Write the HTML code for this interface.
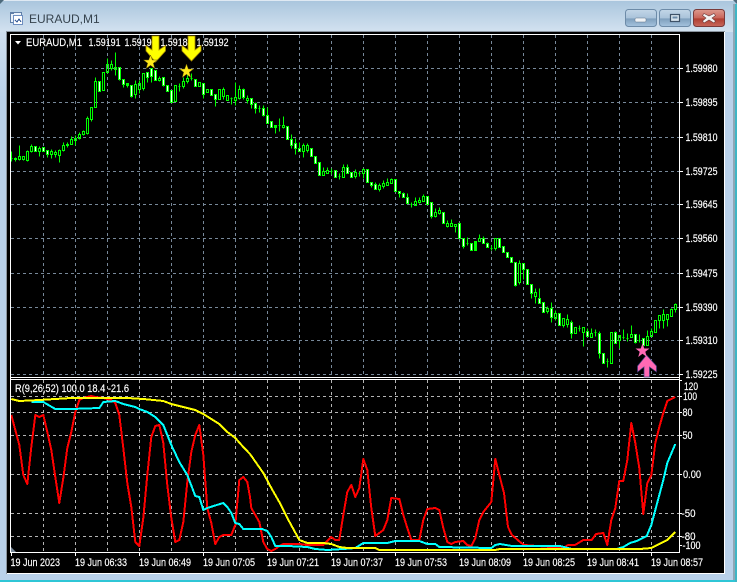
<!DOCTYPE html>
<html><head><meta charset="utf-8"><style>
html,body{margin:0;padding:0;background:#b9d1ea;width:737px;height:582px;overflow:hidden}
svg{display:block;position:absolute;left:0;top:0}
text{font-family:"Liberation Sans",sans-serif;font-size:11px;fill:#fff;stroke:#fff;stroke-width:.18px}
.c{shape-rendering:crispEdges;fill:none}
</style></head><body>
<svg width="737" height="582" viewBox="0 0 737 582" xmlns="http://www.w3.org/2000/svg">
<defs>
<linearGradient id="tb" x1="0" y1="0" x2="0" y2="1"><stop offset="0" stop-color="#a9c5dd"/><stop offset="1" stop-color="#d3e2f0"/></linearGradient>
<linearGradient id="lf" x1="0" y1="0" x2="0" y2="1"><stop offset="0" stop-color="#cfdfee"/><stop offset=".12" stop-color="#b9d1ea"/><stop offset="1" stop-color="#b9d1ea"/></linearGradient>
<linearGradient id="b1" x1="0" y1="0" x2="0" y2="1"><stop offset="0" stop-color="#c3d6e8"/><stop offset=".5" stop-color="#a9c3da"/><stop offset=".55" stop-color="#7f9fbd"/><stop offset="1" stop-color="#a5c3de"/></linearGradient>
<linearGradient id="b2" x1="0" y1="0" x2="0" y2="1"><stop offset="0" stop-color="#dd9a8f"/><stop offset=".5" stop-color="#c9655a"/><stop offset=".55" stop-color="#b03d30"/><stop offset="1" stop-color="#c8685c"/></linearGradient>
</defs>
<!-- window chrome -->
<rect x="0" y="0" width="737" height="582" fill="#b9d1ea"/>
<rect x="0" y="0" width="737" height="32" fill="url(#tb)"/>
<rect x="0" y="32" width="7" height="548" fill="url(#lf)"/>
<rect x="0" y="0" width="737" height="1" fill="#dfe9f3"/>
<rect x="0" y="580" width="737" height="2" fill="#2fc6d6"/>
<rect x="733" y="4" width="2" height="576" fill="#8fa6b5"/>
<rect x="735" y="4" width="2" height="578" fill="#3fb5c5"/>
<path d="M0 0H4L0 4ZM737 0H733L737 4Z" fill="#4d6a7c"/>
<!-- title -->
<g class="c">
<rect x="10.5" y="12.5" width="11" height="10" fill="#eaf2fb" stroke="#5f7fa8"/>
<rect x="13.5" y="15.5" width="9" height="9" fill="#fff" stroke="#6f8fc0"/>
<rect x="10" y="12" width="4" height="2" fill="#5f7fa8"/>
<path d="M15 20l2 2 2-3 2 3" stroke="#3a5f9a"/>
</g>
<text x="29" y="23" style="font-size:12px;fill:#36434e;stroke:none">EURAUD,M1</text>
<!-- buttons -->
<rect x="625.5" y="9.5" width="31" height="17" rx="3" fill="url(#b1)" stroke="#6d8ba8"/>
<rect x="635" y="18" width="11" height="4" rx="1" fill="#f0f3f6" stroke="#5b7088" stroke-width=".5"/>
<rect x="659.5" y="9.5" width="31" height="17" rx="3" fill="url(#b1)" stroke="#6d8ba8"/>
<rect x="670.5" y="14.5" width="9" height="7" fill="#d8e4ee" stroke="#3e5268" stroke-width="1.2"/>
<rect x="672.5" y="16.5" width="5" height="2" fill="#6a8aa8"/>
<rect x="693.5" y="9.5" width="31" height="17" rx="3" fill="url(#b2)" stroke="#7a3a3a"/>
<path d="M704 13.5l5 2.5 5-2.5 1.5 2-3.5 2.5 3.5 3-1.5 2-5-3-5 3-1.5-2 3.5-3-3.5-2.5z" fill="#f4f4f4" stroke="#6b3a3a" stroke-width=".6"/>
<!-- client -->
<rect x="6" y="31" width="719" height="543" fill="#8a949e"/>
<rect x="7" y="32" width="718" height="542" fill="#fff"/>
<rect x="7" y="32" width="717" height="541" fill="#000"/>
<!-- grid main -->
<g class="c" stroke="#778899" stroke-width="1" stroke-dasharray="3 3">
<path d="M11 68.5H679M11 102.5H679M11 137.5H679M11 171.5H679M11 204.5H679M11 238.5H679M11 273.5H679M11 307.5H679M11 340.5H679M11 374.5H679"/>
<path d="M43.5 35V377M75.5 35V377M107.5 35V377M139.5 35V377M171.5 35V377M203.5 35V377M235.5 35V377M267.5 35V377M299.5 35V377M331.5 35V377M363.5 35V377M395.5 35V377M427.5 35V377M459.5 35V377M491.5 35V377M523.5 35V377M555.5 35V377M587.5 35V377M619.5 35V377M651.5 35V377"/>
</g>
<!-- grid sub -->
<g class="c" stroke="#b4b4b4" stroke-width="1" stroke-dasharray="3 3">
<path d="M11 396.5H679M11 412.5H679M11 435.5H679M11 474.5H679M11 513.5H679M11 536.5H679"/>
<path d="M43.5 380V552M75.5 380V552M107.5 380V552M139.5 380V552M171.5 380V552M203.5 380V552M235.5 380V552M267.5 380V552M299.5 380V552M331.5 380V552M363.5 380V552M395.5 380V552M427.5 380V552M459.5 380V552M491.5 380V552M523.5 380V552M555.5 380V552M587.5 380V552M619.5 380V552M651.5 380V552"/>
</g>
<!-- candles -->
<g class="c" transform="translate(.5 .5)" stroke="#00ff00" stroke-width="1">
<path d="M11 151V161M10 158h2M15 157V161M14 158h2V159h-2zM19 145V156M19 159V160M18 156h2V159h-2zM22 156h2V159h-2zM23 159V160M27 150V151M27 160V161M26 151h2V160h-2zM31 144V146M31 151V152M30 146h2V151h-2zM34 146h2V151h-2zM39 146V148M39 151V156M38 148h2V151h-2zM42 147h2V151h-2zM47 154V157M46 150h2V154h-2zM51 149V151M51 154V158M50 151h2V154h-2zM55 150V152M55 154V157M54 152h2V154h-2zM59 149V150M59 155V162M58 150h2V155h-2zM63 142V145M63 150V151M62 145h2V150h-2zM67 142V147M66 144h2V145h-2zM71 136V139M70 139h2V144h-2zM75 135V138M75 140V145M74 138h2V140h-2zM79 132V134M79 138V139M78 134h2V138h-2zM83 130V131M83 134V135M82 131h2V134h-2zM87 116V118M87 133V134M86 118h2V133h-2zM91 119V121M90 107h2V119h-2zM95 77V81M94 81h2V107h-2zM98 81h2V91h-2zM102 72h2V90h-2zM107 58V64M107 72V73M106 64h2V72h-2z"/>
<path d="M111 60V64M111 68V70M110 64h2V68h-2zM115 52V67M115 69V75M114 67h2V69h-2zM118 67h2V79h-2zM119 79V80M122 79h2V84h-2zM123 84V87M127 83V87M126 83h2V85h-2zM130 85h2V96h-2zM131 96V97M135 80V84M135 94V98M134 84h2V94h-2zM139 80V83M139 89V93M138 83h2V89h-2zM142 73h2V88h-2zM143 88V90M146 72h2V77h-2zM147 77V82M150 68h2V76h-2zM151 76V82M154 70h2V80h-2zM159 76V78M159 80V81M158 78h2V80h-2zM162 77h2V85h-2zM163 85V86M166 85h2V91h-2zM170 90h2V102h-2zM174 85h2V101h-2zM179 83V91M178 86h2M183 77V81M183 86V88M182 81h2V86h-2zM187 74V78M187 81V83M186 78h2V81h-2zM191 73V80M190 78h2M194 79h2V86h-2zM198 82h2V86h-2zM202 83h2V94h-2zM203 94V98M206 89h2V92h-2zM210 89h2V95h-2zM214 94h2V99h-2zM215 99V106M218 89h2V99h-2zM223 87V89M223 96V99M222 89h2V96h-2zM226 95h2V100h-2zM231 97V104M230 98h2M235 82V97M235 100V105M234 97h2V100h-2zM239 85V89M239 98V99M238 89h2V98h-2zM243 88V89M243 97V99M242 89h2V97h-2zM247 95V98M247 100V103M246 98h2V100h-2zM251 104V108M250 98h2V104h-2zM255 102V103M255 108V113M254 103h2V108h-2zM259 105V112M258 108h2M263 105V108M263 115V116M262 108h2V115h-2zM267 107V115M266 115h2V123h-2zM271 121V127M270 121h2V127h-2zM275 125V133M274 125h2V127h-2zM279 118V131M278 125h2M283 116V125M283 127V128M282 125h2V127h-2zM286 126h2V139h-2z"/>
<path d="M291 134V139M291 145V148M290 139h2V145h-2zM295 138V143M295 148V154M294 143h2V148h-2zM299 142V148M298 148h2V151h-2zM303 143V145M303 151V157M302 145h2V151h-2zM307 143V145M307 150V152M306 145h2V150h-2zM310 148h2V156h-2zM314 156h2V163h-2zM318 162h2V175h-2zM323 167V171M322 171h2V175h-2zM327 167V170M326 170h2V173h-2zM331 168V174M330 171h2M334 170h2V177h-2zM339 173V179M338 176h2M343 164V167M342 167h2V177h-2zM347 164V167M346 167h2V173h-2zM350 172h2V177h-2zM355 169V172M355 176V178M354 172h2V176h-2zM359 171V176M358 173h2M363 168V169M363 173V178M362 169h2V173h-2zM366 169h2V182h-2zM370 182h2V185h-2zM371 185V187M375 182V184M374 184h2V189h-2zM379 183V185M379 189V191M378 185h2V189h-2zM383 180V183M383 186V188M382 183h2V186h-2zM387 178V182M386 182h2V185h-2zM391 178V179M390 179h2V183h-2zM394 179h2V191h-2zM398 191h2V193h-2zM399 193V197M403 192V193M402 193h2V197h-2zM407 193V197M406 197h2V203h-2zM411 202V207M410 204h2M415 197V201M414 201h2V205h-2zM419 197V200M419 202V203M418 200h2V202h-2zM423 194V196M422 196h2V201h-2zM426 196h2V204h-2zM430 202h2V216h-2zM431 216V218M435 208V212M435 216V217M434 212h2V216h-2zM439 207V210M439 213V214M438 210h2V213h-2zM442 212h2V223h-2zM447 220V223M447 226V227M446 223h2V226h-2zM451 219V223M450 223h2V226h-2zM455 226V232M454 224h2V226h-2zM458 223h2V238h-2zM462 238h2V246h-2zM463 246V248M467 237V245M466 243h2M470 243h2V250h-2zM475 241V250M474 241h2V250h-2zM479 234V238M478 238h2V241h-2zM483 236V238M482 238h2V243h-2zM487 242V243M486 243h2V247h-2zM491 245V250M490 248h2M495 248V250M494 238h2V248h-2zM498 238h2V247h-2zM502 246h2V252h-2zM506 252h2V257h-2zM510 257h2V262h-2zM514 262h2V285h-2zM515 285V286M519 260V263M519 282V284M518 263h2V282h-2zM522 263h2V269h-2zM523 269V279M526 269h2V284h-2zM530 284h2V293h-2zM531 293V298M535 288V292M535 296V303M534 292h2V296h-2zM539 288V298M538 298h2V303h-2zM542 302h2V312h-2zM547 306V308M547 311V313M546 308h2V311h-2zM551 302V308M551 317V322M550 308h2V317h-2zM555 310V313M555 318V320M554 313h2V318h-2zM558 313h2V325h-2zM563 325V327M562 318h2V325h-2zM567 314V319M567 324V327M566 319h2V324h-2zM571 320V322M571 333V338M570 322h2V333h-2zM574 327h2V333h-2zM579 325V331M578 328h2M583 332V346M582 327h2V332h-2zM587 328V331M586 331h2V336h-2zM591 328V333M590 333h2V337h-2zM595 329V336M594 332h2M599 331V333M599 353V358M598 333h2V353h-2zM602 353h2V363h-2zM607 358V367M606 361h2M610 332h2V363h-2zM615 331V332M614 332h2V343h-2zM619 340V348M618 335h2V340h-2zM623 329V339M622 337h2M627 333V341M626 338h2M631 325V334M630 334h2V337h-2zM634 334h2V342h-2zM635 342V343M639 334V342M638 340h2M642 338h2V345h-2zM647 330V336M646 336h2V345h-2zM651 328V331M650 331h2V336h-2zM654 320h2V332h-2zM659 320V328M658 315h2V320h-2zM663 309V314M663 320V328M662 314h2V320h-2zM667 319V326M666 314h2V319h-2zM671 308V309M670 309h2V316h-2zM675 303V304M675 309V312M674 304h2V309h-2z"/>
</g>
<g class="c" transform="translate(.5 0)" stroke="#f2fff2" stroke-width="1">
<path d="M35 147V151M43 148V151M47 151V154M99 82V91M119 68V79M123 80V84M131 86V96M147 73V77M151 69V76M155 71V80M163 78V85M167 86V91M171 91V102M195 80V86M203 84V94M211 90V95M215 95V99M243 90V97M251 99V104M255 104V108M263 109V115M267 116V123M271 122V127M287 127V139M291 140V145M295 144V148M299 149V151M311 149V156M315 157V163M319 163V175M335 171V177M347 168V173M351 173V177M367 170V182M371 183V185M375 185V189M395 180V191M399 192V193M403 194V197M407 198V203M427 197V204M431 203V216M443 213V223M459 224V238M463 239V246M471 244V250M483 239V243M487 244V247M499 239V247M503 247V252M507 253V257M511 258V262M515 263V285M523 264V269M527 270V284M531 285V293M539 299V303M543 303V312M551 309V317M559 314V325M571 323V333M587 332V336M599 334V353M603 354V363M615 333V343M635 335V342M643 339V345"/>
</g>
<!-- indicator lines -->
<g fill="none" stroke-width="2" shape-rendering="crispEdges" stroke-linejoin="round">
<polyline stroke="#ff0000" points="11.3,415 19.3,445 23.3,475 27.3,484 31.3,447 35.3,415 39.3,417 43.3,415 47.3,432 51.3,450 55.3,477 59.3,503 63.3,478 67.3,448 71.3,432 75.3,412 79.3,400 83.3,398 87.3,397 91.3,396 95.3,397 103.3,398 111.3,400 115.3,403 119.3,415 123.3,448 127.3,483 131.3,507 135.3,542 139.3,546 143.3,518 147.3,475 151.3,437 155.3,426 159.3,425 163.3,443 167.3,485 171.3,518 175.3,542 179.3,540 183.3,522 187.3,482 191.3,452 195.3,435 199.3,425 203.3,455 207.3,508 211.3,523 215.3,544 219.3,537 223.3,535 231.3,535 235.3,525 239.3,480 243.3,477 247.3,482 250,497 251.3,508 255.3,515 259.3,522 263.3,542 267.3,549 271.3,551 275.3,549 279.3,546 283.3,544 299.3,544 307.3,545 323.3,545 327.3,541 331.3,537 335.3,540 339.3,540 343.3,515 347.3,492 351.3,485 355.3,497 359.3,488 363.3,459 367.3,470 371.3,508 375.3,536 379.3,533 383.3,530 387.3,520 391.3,498 399.3,499 403.3,515 407.3,528 411.3,540 419.3,540 423.3,520 427.3,509 435.3,508 439.3,510 443.3,528 447.3,542 451.3,544 455.3,542 463.3,541 467.3,545 471.3,546 475.3,538 479.3,520 483.3,512 491.3,502 495.3,459 499.3,475 504,493 508,527 512,535 520,542 524,545 563,548 568.3,545 575,545 583.3,540 591.7,540 596,534 603.3,533 607.3,545 611.3,520 615.3,508 619.3,481 623.3,481 627.3,460 631.3,423 635.3,443 639.3,468 643.3,514 647.3,483 651.3,475 655.3,443 659.3,427 663.3,413 667.3,401 675.3,397"/>
<polyline stroke="#00ffff" points="31.3,402 43.3,402 55.3,409 71.3,409 99.3,408 103.3,402 115.3,401 123.3,404 135.3,407 139.3,409 147.3,412 155.3,417 163.3,425 171.3,445 179.3,462 187.3,475 195.3,496 199.3,497 203.3,510 207.3,508 216.7,505 223.3,503 227.3,507 231.3,513 235.3,523 239.3,524 243.3,529 250,529 262,529 267.3,531 271.3,537 275.3,546 287.3,546 307.3,547 315.3,549 327.3,550 343.3,549 355.3,548 363.3,543 387.3,543 395.3,541 419.3,541 427.3,544 435.3,544 439.3,547 491.3,548 495.3,545 500,544 512,546 560,546 571.7,549 616.7,549 623.3,547 630,543 636.7,541 646.7,536 651.3,525 655.3,510 663.3,480 667.3,463 675.3,444"/>
<polyline stroke="#ffff00" points="11.3,399 19.3,401 39.3,400 55.3,399 71.3,398 99.3,398 127.3,398 143.3,399 163.3,401 171.3,404 187.3,408 195.3,410 203.3,414 211.3,419 219.3,424 227.3,432 235.3,438 243.3,447 250,454 263.3,473 271.3,488 279.3,502 287.3,518 299.3,540 307.3,543 323.3,543 331.3,544 339.3,547 347.3,548 375.3,548 379.3,550 495,550 500,549 640,549 651.3,548 659.3,544 667.3,540 675.3,532"/>
</g>
<!-- frame lines -->
<g class="c" fill="none" stroke="#fff" stroke-width="1">
<path d="M10.5 34V553M679.5 34V553M10 34.5H680M10 377.5H680M10 379.5H680M10 552.5H680"/>
<path d="M680 68.5h3M680 102.5h3M680 137.5h3M680 171.5h3M680 204.5h3M680 238.5h3M680 273.5h3M680 307.5h3M680 340.5h3M680 374.5h3M680 380.5h2M680 396.5h2M680 412.5h2M680 435.5h2M680 474.5h2M680 513.5h2M680 536.5h2M680 545.5h2"/>
<path d="M11.5 553v3M75.5 553v3M139.5 553v3M203.5 553v3M267.5 553v3M331.5 553v3M395.5 553v3M459.5 553v3M523.5 553v3M587.5 553v3M651.5 553v3"/>
</g>
<polygon points="15,41 21,41 18,44.5" fill="#fff"/>
<polygon points="11,547 16,552 11,552" fill="#778899"/>
<!-- labels -->
<text x="26" y="46" textLength="56" lengthAdjust="spacingAndGlyphs">EURAUD,M1</text>
<text x="88.5" y="46" textLength="32" lengthAdjust="spacingAndGlyphs">1.59191</text>
<text x="124.5" y="46" textLength="32" lengthAdjust="spacingAndGlyphs">1.59191</text>
<text x="160.5" y="46" textLength="32" lengthAdjust="spacingAndGlyphs">1.59188</text>
<text x="196.5" y="46" textLength="32" lengthAdjust="spacingAndGlyphs">1.59192</text>
<text x="15" y="392" textLength="114" lengthAdjust="spacingAndGlyphs">R(9,26,52) 100.0 18.4 -21.6</text>
<g>
<text x="685.5" y="72" textLength="32" lengthAdjust="spacingAndGlyphs">1.59980</text>
<text x="685.5" y="106" textLength="32" lengthAdjust="spacingAndGlyphs">1.59895</text>
<text x="685.5" y="141" textLength="32" lengthAdjust="spacingAndGlyphs">1.59810</text>
<text x="685.5" y="175" textLength="32" lengthAdjust="spacingAndGlyphs">1.59725</text>
<text x="685.5" y="208" textLength="32" lengthAdjust="spacingAndGlyphs">1.59645</text>
<text x="685.5" y="242" textLength="32" lengthAdjust="spacingAndGlyphs">1.59560</text>
<text x="685.5" y="277" textLength="32" lengthAdjust="spacingAndGlyphs">1.59475</text>
<text x="685.5" y="311" textLength="32" lengthAdjust="spacingAndGlyphs">1.59390</text>
<text x="685.5" y="344" textLength="32" lengthAdjust="spacingAndGlyphs">1.59310</text>
<text x="685.5" y="378" textLength="32" lengthAdjust="spacingAndGlyphs">1.59225</text>
<text x="684" y="390" textLength="14" lengthAdjust="spacingAndGlyphs">120</text>
<text x="683" y="400" textLength="14" lengthAdjust="spacingAndGlyphs">100</text>
<text x="682.5" y="416" textLength="10" lengthAdjust="spacingAndGlyphs">80</text>
<text x="682.5" y="439" textLength="10" lengthAdjust="spacingAndGlyphs">50</text>
<text x="683" y="478" textLength="18" lengthAdjust="spacingAndGlyphs">0.00</text>
<text x="681.5" y="517" textLength="14" lengthAdjust="spacingAndGlyphs">-50</text>
<text x="681.5" y="540" textLength="14" lengthAdjust="spacingAndGlyphs">-80</text>
<text x="682.5" y="549" textLength="18" lengthAdjust="spacingAndGlyphs">-100</text>
</g>
<g>
<text x="10.5" y="566" textLength="49.5" lengthAdjust="spacingAndGlyphs">19 Jun 2023</text>
<text x="75" y="566" textLength="52" lengthAdjust="spacingAndGlyphs">19 Jun 06:33</text>
<text x="139" y="566" textLength="52" lengthAdjust="spacingAndGlyphs">19 Jun 06:49</text>
<text x="203" y="566" textLength="52" lengthAdjust="spacingAndGlyphs">19 Jun 07:05</text>
<text x="267" y="566" textLength="52" lengthAdjust="spacingAndGlyphs">19 Jun 07:21</text>
<text x="331" y="566" textLength="52" lengthAdjust="spacingAndGlyphs">19 Jun 07:37</text>
<text x="395" y="566" textLength="52" lengthAdjust="spacingAndGlyphs">19 Jun 07:53</text>
<text x="459" y="566" textLength="52" lengthAdjust="spacingAndGlyphs">19 Jun 08:09</text>
<text x="523" y="566" textLength="52" lengthAdjust="spacingAndGlyphs">19 Jun 08:25</text>
<text x="587" y="566" textLength="52" lengthAdjust="spacingAndGlyphs">19 Jun 08:41</text>
<text x="651" y="566" textLength="52" lengthAdjust="spacingAndGlyphs">19 Jun 08:57</text>
</g>
<!-- arrows and stars -->
<path d="M152 36H159V50L165.5 45.5V51L155.5 62L146 51V45.5L152 50Z" fill="#ffff00" stroke="#a88a00" stroke-width=".8"/>
<path d="M188 36H195V50L201 45.5V51L191.5 61L182 51V45.5L188 50Z" fill="#ffff00" stroke="#a88a00" stroke-width=".8"/>
<polygon points="150.5,55 152.3,60 157.5,60 153.3,63.2 154.8,68.5 150.5,65.3 146.2,68.5 147.7,63.2 143.5,60 148.7,60" fill="#ffe81a" stroke="#6b5a00" stroke-width=".5"/>
<polygon points="186.5,64 188.3,69 193.5,69 189.3,72.2 190.8,77.5 186.5,74.3 182.2,77.5 183.7,72.2 179.5,69 184.7,69" fill="#ffe81a" stroke="#6b5a00" stroke-width=".5"/>
<path d="M644 377V367L637.5 372V366L646.5 355L656.5 366V372L649.5 367V377Z" fill="#ff69b4" stroke="#3a3a7a" stroke-width=".7"/>
<polygon points="642.5,343.5 644.3,348.5 649.5,348.5 645.3,351.7 646.8,357 642.5,353.8 638.2,357 639.7,351.7 635.5,348.5 640.7,348.5" fill="#ff69b4"/>
</svg>
</body></html>
